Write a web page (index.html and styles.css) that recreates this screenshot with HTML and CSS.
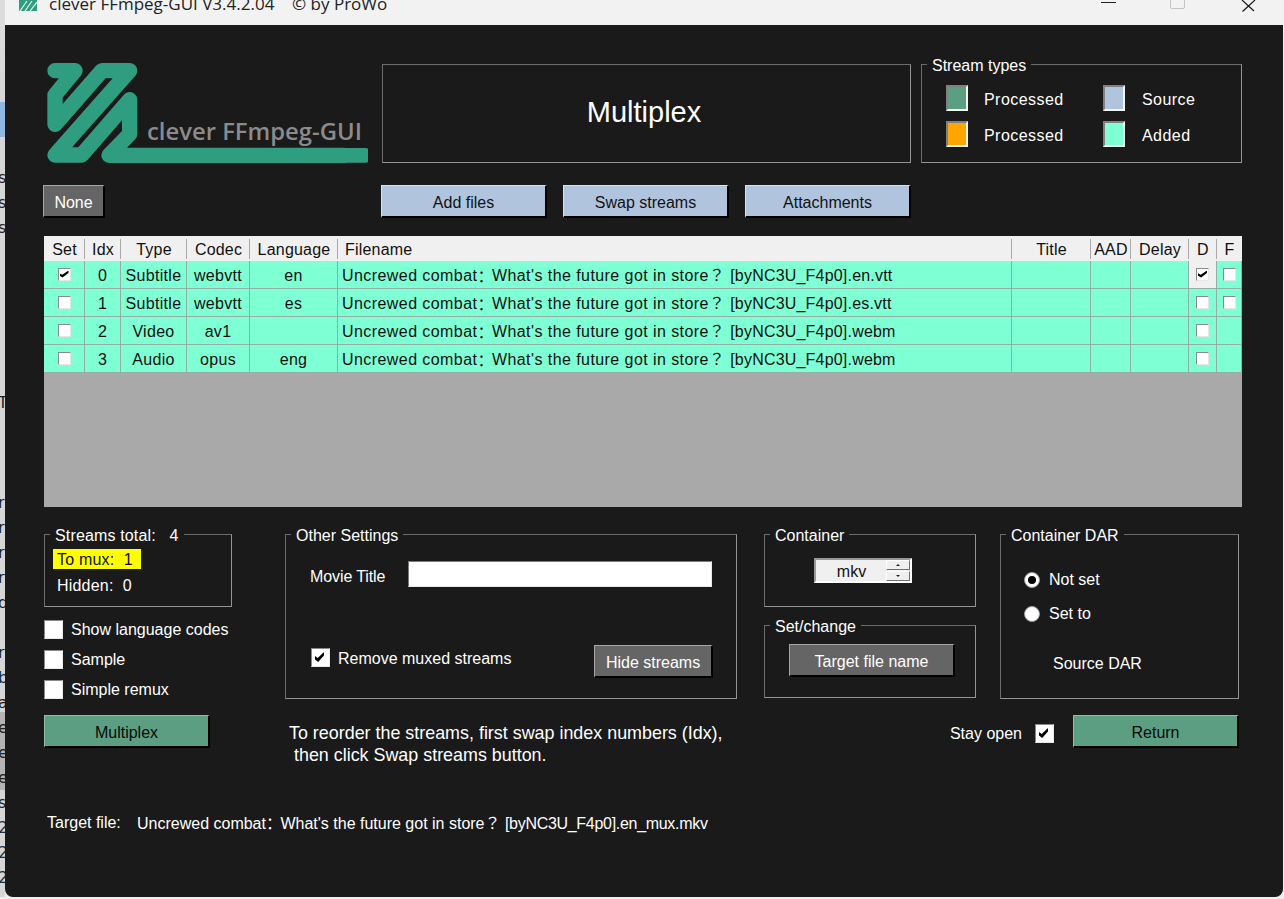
FILE: index.html
```html
<!DOCTYPE html>
<html lang="en">
<head>
<meta charset="utf-8">
<title>clever FFmpeg-GUI</title>
<link rel="stylesheet" href="styles.css">
</head>
<body>
<div class="desk">
  <div class="strip" aria-hidden="true">
    <div class="frag"></div><div class="frag"></div><div class="frag"></div><div class="frag"></div><div class="frag"></div><div class="frag"></div><div class="frag"></div>
    <div class="frag">s</div><div class="frag">s</div><div class="frag">s</div>
    <div class="frag"></div><div class="frag"></div><div class="frag"></div><div class="frag"></div><div class="frag"></div><div class="frag"></div>
    <div class="frag">T</div>
    <div class="frag"></div><div class="frag"></div><div class="frag"></div>
    <div class="frag">r</div><div class="frag">r</div><div class="frag">r</div><div class="frag">r</div><div class="frag">d</div>
    <div class="frag"></div>
    <div class="frag">r</div><div class="frag link">b</div><div class="frag">a</div><div class="frag">e</div><div class="frag">e</div><div class="frag">e</div><div class="frag">s</div><div class="frag link">2</div><div class="frag link">2</div><div class="frag link">2</div>
  </div>
  <main class="window">
    <header class="titlebar">
      <svg class="app-icon" viewBox="0 0 18 12" aria-hidden="true">
        <rect width="18" height="12" fill="#2f9e80"/>
        <path d="M1 12 8 2M6 12 13 2M11 12 18 3" stroke="#e8f3ef" stroke-width="1.2" fill="none"/>
      </svg>
      <span class="app-title">clever FFmpeg-GUI V3.4.2.04 &nbsp; &nbsp;© by ProWo</span>
      <div class="win-controls">
        <span class="ctl-min"></span>
        <span class="ctl-max"></span>
        <svg class="ctl-close" viewBox="0 0 16 12" aria-hidden="true"><path d="M1 0 13 11M14 0 1.500 11.500" stroke="#111" stroke-width="1.100" fill="none"/></svg>
      </div>
    </header>

    <div class="client">
      <section class="top-row">
        <svg class="logo" viewBox="0 0 972 318" role="img" aria-label="clever FFmpeg-GUI logo">
          <path class="logo-ribbon" d="M33 32H93L33 105V193L174 32H257L33 285H113L257 119V222L195 286H900"/>
          <rect class="logo-end" x="880" y="264" width="95" height="44" rx="10"/>
          <text class="logo-text" x="309" y="240">clever FFmpeg-GUI</text>
        </svg>
        <div class="mode-panel">Multiplex</div>
        <div class="group stream-types">
          <span class="group-title">Stream types</span>
          <div class="legend-grid">
            <span class="swatch sw-green"></span><span class="legend-label">Processed</span>
            <span class="swatch sw-blue"></span><span class="legend-label">Source</span>
            <span class="swatch sw-orange"></span><span class="legend-label">Processed</span>
            <span class="swatch sw-aqua"></span><span class="legend-label">Added</span>
          </div>
        </div>
      </section>

      <section class="action-row">
        <button class="btn btn-grey btn-none">None</button>
        <div class="action-buttons">
          <button class="btn btn-blue">Add files</button>
          <button class="btn btn-blue">Swap streams</button>
          <button class="btn btn-blue">Attachments</button>
        </div>
      </section>

      <section class="table">
        <div class="row head">
          <div class="cell">Set</div><div class="cell">Idx</div><div class="cell">Type</div><div class="cell">Codec</div><div class="cell">Language</div><div class="cell left">Filename</div><div class="cell">Title</div><div class="cell">AAD</div><div class="cell">Delay</div><div class="cell">D</div><div class="cell">F</div>
        </div>
        <div class="row">
          <div class="cell"><span class="cb on"></span></div><div class="cell">0</div><div class="cell">Subtitle</div><div class="cell">webvtt</div><div class="cell">en</div><div class="cell file">Uncrewed combat<span class="fw-colon">：</span>What's the future got in store？ <span class="tail">[byNC3U_F4p0].en.vtt</span></div><div class="cell"></div><div class="cell"></div><div class="cell"></div><div class="cell current"><span class="cb on"></span></div><div class="cell"><span class="cb"></span></div>
        </div>
        <div class="row">
          <div class="cell"><span class="cb"></span></div><div class="cell">1</div><div class="cell">Subtitle</div><div class="cell">webvtt</div><div class="cell">es</div><div class="cell file">Uncrewed combat<span class="fw-colon">：</span>What's the future got in store？ <span class="tail">[byNC3U_F4p0].es.vtt</span></div><div class="cell"></div><div class="cell"></div><div class="cell"></div><div class="cell"><span class="cb"></span></div><div class="cell"><span class="cb"></span></div>
        </div>
        <div class="row">
          <div class="cell"><span class="cb"></span></div><div class="cell">2</div><div class="cell">Video</div><div class="cell">av1</div><div class="cell"></div><div class="cell file">Uncrewed combat<span class="fw-colon">：</span>What's the future got in store？ <span class="tail">[byNC3U_F4p0].webm</span></div><div class="cell"></div><div class="cell"></div><div class="cell"></div><div class="cell"><span class="cb"></span></div><div class="cell"></div>
        </div>
        <div class="row">
          <div class="cell"><span class="cb"></span></div><div class="cell">3</div><div class="cell">Audio</div><div class="cell">opus</div><div class="cell">eng</div><div class="cell file">Uncrewed combat<span class="fw-colon">：</span>What's the future got in store？ <span class="tail">[byNC3U_F4p0].webm</span></div><div class="cell"></div><div class="cell"></div><div class="cell"></div><div class="cell"><span class="cb"></span></div><div class="cell"></div>
        </div>
      </section>

      <section class="lower">
        <div class="left-col">
          <div class="group streams">
            <span class="group-title">Streams total: &nbsp; 4</span>
            <div class="to-mux">To mux: &nbsp;1</div>
            <div class="hidden-count">Hidden: &nbsp;0</div>
          </div>
          <div class="options">
            <label class="check-row"><span class="big-cb"></span>Show language codes</label>
            <label class="check-row"><span class="big-cb"></span>Sample</label>
            <label class="check-row"><span class="big-cb"></span>Simple remux</label>
          </div>
        </div>

        <div class="group other">
          <span class="group-title">Other Settings</span>
          <div class="title-row"><span class="title-label">Movie Title</span><span class="text-input"></span></div>
          <div class="mux-row">
            <label class="check-row"><span class="big-cb on"></span>Remove muxed streams</label>
            <button class="btn btn-grey btn-hide">Hide streams</button>
          </div>
        </div>

        <div class="mid-col">
          <div class="group container">
            <span class="group-title">Container</span>
            <div class="spinner"><span class="spin-value">mkv</span><span class="spin-btns"><i class="up"></i><i class="down"></i></span></div>
          </div>
          <div class="group setchange">
            <span class="group-title">Set/change</span>
            <button class="btn btn-grey btn-target">Target file name</button>
          </div>
        </div>

        <div class="group dar">
          <span class="group-title">Container DAR</span>
          <label class="radio-row"><span class="radio on"></span>Not set</label>
          <label class="radio-row"><span class="radio"></span>Set to</label>
          <div class="source-dar">Source DAR</div>
        </div>
      </section>

      <section class="bottom-row">
        <button class="btn btn-green btn-mux">Multiplex</button>
        <p class="hint">To reorder the streams, first swap index numbers (Idx),<br>&nbsp;then click Swap streams button.</p>
        <div class="stay"><span class="stay-label">Stay open</span><span class="big-cb on"></span></div>
        <button class="btn btn-green btn-return">Return</button>
      </section>

      <footer class="target"><span class="target-label">Target file:</span><span>Uncrewed combat<span class="fw-colon">：</span>What's the future got in store？ <span class="target-tail">[byNC3U_F4p0].en_mux.mkv</span></span></footer>
    </div>
  </main>
</div>
</body>
</html>
```

FILE: styles.css
```css
* { box-sizing: border-box; }
html, body { margin: 0; height: 899px; overflow: hidden; background: #efefef; }
body { font: 16px/19px "Liberation Sans", "Noto Sans CJK JP", Arial, sans-serif; color: #fff; }

.desk { display: flex; height: 897px; }

.strip {
  width: 5px; flex: none; overflow: hidden; color: #222;
  background: linear-gradient(to bottom, #dcdcdc 25px, #d6d6d6 102px, #8fb7e2 102px, #8fb7e2 137px, #d6d6d6 137px, #d6d6d6 712px, #b4b4b4 712px, #b4b4b4 790px, #d6d6d6 790px);
}
.frag { height: 25px; margin-left: -2px; font: 16px/25px "DejaVu Sans", sans-serif; position: relative; top: -10px; }
.frag.link { color: #1a3048; }

.window { width: 1278px; height: 897px; background: #1a1a1a; border-radius: 0 0 8px 8px; overflow: hidden; display: flex; flex-direction: column; }

.titlebar { height: 25px; flex: none; background: #f2f2f2; display: flex; align-items: flex-start; color: #111; overflow: hidden; padding-left: 14px; }
.app-icon { width: 18px; height: 12px; margin-top: -1px; }
.app-title { font: 17px/22px "Open Sans", sans-serif; margin: -7px 0 0 12px; color: #222; white-space: pre; }
.win-controls { margin-left: auto; display: flex; align-items: flex-start; }
.ctl-min { width: 15px; height: 1px; background: #222; margin: 2px 54px 0 0; }
.ctl-max { width: 15px; height: 15px; border: 1px solid #c4c4c4; border-radius: 2px; margin: -6px 56px 0 0; }
.ctl-close { width: 16px; height: 12px; margin: 0 26px 0 0; }

.client { flex: 1; padding: 39px 41px 0 38px; display: flex; flex-direction: column; }

.group { position: relative; border: 1px solid; border-color: #6c6c6c #949494 #949494 #6c6c6c; }
.group-title { position: absolute; top: -9px; left: 5px; padding: 0 5px; background: #1a1a1a; white-space: nowrap; }

.top-row { display: flex; height: 99px; }
.logo { width: 324px; height: 106px; margin: -4px 0 0 1px; flex: none; }
.logo-ribbon { fill: none; stroke: #2f9e80; stroke-width: 46; stroke-linejoin: round; stroke-linecap: round; }
.logo-end { fill: #2f9e80; }
.logo-text { fill: #8b8b8b; font: 600 71.5px "Open Sans", sans-serif; }
.mode-panel { width: 529px; height: 99px; margin-left: 14px; padding: 0 5px 3px 0; border: 1px solid; border-color: #6c6c6c #949494 #949494 #6c6c6c; display: flex; align-items: center; justify-content: center; font-size: 29px; }
.stream-types { width: 321px; height: 99px; margin-left: 10px; }
.legend-grid { display: grid; grid-template-columns: 22px 103px 22px auto; column-gap: 16px; grid-auto-rows: 26px; row-gap: 10px; align-items: center; padding: 20px 0 0 24px; }
.legend-label { letter-spacing: .45px; padding-top: 2px; }
.legend-label:nth-child(4n) { margin-left: 1px; }
.swatch { width: 22px; height: 26px; border: 2px solid; border-color: #808080 #f4f4f4 #f4f4f4 #808080; }
.sw-green { background: #5b9e82; }
.sw-blue { background: #b0c4de; }
.sw-orange { background: #ffa500; }
.sw-aqua { background: #7fffd4; }

.action-row { display: flex; margin-top: 22px; height: 33px; }
.action-buttons { display: flex; gap: 16px; margin-left: 276px; }

.btn { font: 16px/19px "Liberation Sans", sans-serif; height: 33px; padding: 2px 0 0; border: solid; border-width: 1px 2px 2px 1px; border-color: #a6a6a6 #000 #000 #a6a6a6; cursor: default; }
.btn-grey { background: #656565; color: #fff; }
.btn-blue { background: #b0c4de; color: #111; width: 166px; border-color: #dbe3ee #000 #000 #dbe3ee; }
.btn-green { background: #5b9e82; color: #0a0a0a; width: 166px; border-color: #8fc0ac #000 #000 #8fc0ac; }
.btn-none { width: 62px; }

.table { margin: 18px 0 0 1px; height: 271px; width: 1198px; background: #a9a9a9; color: #111; }
.row { display: grid; grid-template-columns: 41px 36px 66px 63px 88px 674px 79px 40px 58px 28px 25px; height: 28px; background: #7fffd4; letter-spacing: .3px; }
.cell { display: flex; align-items: center; justify-content: center; padding-top: 1px; border: solid #93aea5; border-width: 0 1px 1px 0; white-space: pre; overflow: hidden; }
.cell.file { justify-content: flex-start; padding-left: 4px; letter-spacing: .43px; }
.fw-colon { font-family: "Noto Sans CJK SC", sans-serif; letter-spacing: -1.5px; }
.tail { letter-spacing: .2px; }
.cell.current { background: #f0f0f0; }
.head { height: 25px; background: #f0f0f0; letter-spacing: .2px; }
.head .cell { border: 0; position: relative; padding-top: 2px; overflow: visible; }
.head .cell + .cell::before { content: ""; position: absolute; left: -1px; top: 3px; bottom: 2px; width: 1px; background: #a8a8a8; }
.head .cell.left { justify-content: flex-start; padding-left: 7px; }

.cb { width: 13px; height: 13px; background: #fff; border: 1px solid; border-color: #8a8a8a #e6e6e6 #e6e6e6 #8a8a8a; position: relative; margin-top: -2px; }
.cb.on::after, .big-cb.on::after { content: ""; position: absolute; background: #000; clip-path: polygon(0 40%, 30% 60%, 100% 0, 100% 35%, 35% 100%, 0 75%); }
.cb.on::after { left: 1px; top: 2px; width: 9px; height: 7px; }

.lower { display: grid; grid-template-columns: 188px 452px 212px 239px; margin: 27px 0 0 1px; height: 164px; }
.left-col { display: flex; flex-direction: column; }
.streams { height: 73px; padding: 14px 0 0 8px; letter-spacing: .2px; }
.streams .group-title { letter-spacing: .15px; }
.to-mux { width: 88px; height: 20px; background: #ffff00; color: #111; padding-left: 4px; line-height: 21px; white-space: pre; }
.hidden-count { margin: 7px 0 0 4px; }
.options { display: flex; flex-direction: column; gap: 11px; margin-top: 13px; }
.check-row { display: flex; align-items: center; gap: 8px; height: 19px; }
.big-cb { width: 19px; height: 19px; flex: none; background: #fff; border: 1px solid; border-color: #8a8a8a #e8e8e8 #e8e8e8 #8a8a8a; position: relative; }
.big-cb.on::after { left: 3px; top: 3px; width: 9px; height: 10px; }

.other { margin-left: 53px; width: 452px; padding: 26px 23px 0 24px; height: 165px; }
.title-row { display: flex; align-items: center; }
.title-label { width: 98px; letter-spacing: -.1px; padding-top: 4px; }
.text-input { width: 304px; height: 26px; background: #fff; border: 1px solid; border-color: #7a7a7a #e8e8e8 #e8e8e8 #7a7a7a; }
.mux-row { display: flex; justify-content: space-between; align-items: flex-start; margin: 58px 0 0 1px; }
.mux-row .check-row { margin-top: 3px; height: 21px; }
.mux-row .big-cb { align-self: flex-start; }
.btn-hide { width: 119px; }

.mid-col { margin-left: 80px; width: 212px; display: flex; flex-direction: column; gap: 18px; }
.container { height: 73px; padding: 23px 0 0 49px; }
.spinner { width: 98px; height: 25px; background: #f0f0f0; color: #111; display: flex; align-items: center; border: 2px solid; border-color: #999 #fff #fff #999; }
.spin-value { flex: 1; text-align: center; padding: 2px 0 0 1px; }
.spin-btns { width: 24px; height: 21px; display: flex; flex-direction: column; gap: 1px; }
.spin-btns i { flex: 1; background: #efefef; border: 1px solid; border-color: #fff #707070 #707070 #fff; position: relative; }
.spin-btns i::after { content: ""; position: absolute; left: 9px; top: 3px; border: 2px solid transparent; }
.spin-btns .up::after { border-bottom-color: #222; border-top-width: 0; }
.spin-btns .down::after { border-top-color: #222; border-bottom-width: 0; }
.setchange { height: 73px; padding: 18px 0 0 24px; }
.btn-target { width: 166px; }

.dar { margin-left: 104px; width: 239px; height: 165px; padding: 35px 0 0 23px; }
.radio-row { display: flex; align-items: center; gap: 9px; height: 19px; margin-bottom: 15px; }
.radio { width: 16px; height: 16px; border-radius: 50%; background: #fff; border: 1px solid #9a9a9a; position: relative; flex: none; }
.radio.on::after { content: ""; position: absolute; inset: 3px; border-radius: 50%; background: #000; }
.source-dar { margin: 31px 0 0 29px; }

.bottom-row { display: flex; align-items: flex-start; margin: 17px 3px 0 1px; height: 60px; }
.btn-mux { flex: none; }
.hint { margin: 7px 0 0 79px; font-size: 17.9px; line-height: 22px; white-space: nowrap; }
.stay { margin: 9px 0 0 auto; display: flex; align-items: center; gap: 13px; }
.btn-return { margin: 0 0 0 19px; flex: none; }

.target { margin: 38px 0 0 4px; display: flex; white-space: pre; }
.target-label { width: 90px; }
.target-tail { letter-spacing: -.3px; }
```
